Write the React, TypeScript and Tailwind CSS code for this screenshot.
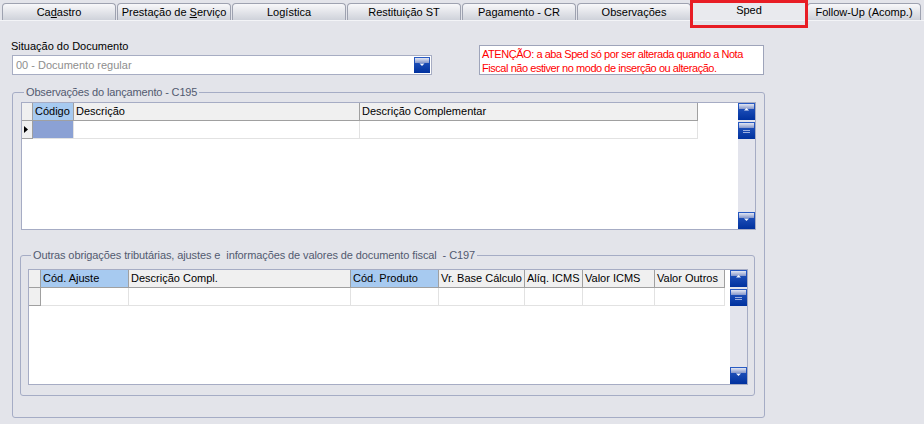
import type { ReactNode } from 'react'

type Col = { label: string; w: string; hl?: boolean }

const tabs: { key: string; label: ReactNode }[] = [
  { key: 'cad', label: <>Ca<u>d</u>astro</> },
  { key: 'pre', label: <>Prestação de <u>S</u>erviço</> },
  { key: 'log', label: 'Logística' },
  { key: 'res', label: 'Restituição ST' },
  { key: 'pag', label: 'Pagamento - CR' },
  { key: 'obs', label: 'Observações' },
  { key: 'sped', label: 'Sped' },
  { key: 'fol', label: 'Follow-Up (Acomp.)' },
]

const c195: Col[] = [
  { label: 'Código', w: 'w-[41px]', hl: true },
  { label: 'Descrição', w: 'w-[286px]' },
  { label: 'Descrição Complementar', w: 'w-[338px]' },
]

const c197: Col[] = [
  { label: 'Cód. Ajuste', w: 'w-[88px]', hl: true },
  { label: 'Descrição Compl.', w: 'w-[222px]' },
  { label: 'Cód. Produto', w: 'w-[88px]', hl: true },
  { label: 'Vr. Base Cálculo', w: 'w-[86px]' },
  { label: 'Alíq. ICMS', w: 'w-[58px]' },
  { label: 'Valor ICMS', w: 'w-[72px]' },
  { label: 'Valor Outros', w: 'w-[70px]' },
]

function BlueBtn({ kind, w = 17, h = 17 }: { kind: 'up' | 'down' | 'thumb'; w?: number; h?: number }) {
  const cx = w / 2
  return (
    <svg width={w} height={h} viewBox={`0 0 ${w} ${h}`} className="block shrink-0">
      <defs>
        <linearGradient id="bbDark" x1="0" y1="0" x2="0" y2="1">
          <stop offset="0" stopColor="#2a5cc4" />
          <stop offset="1" stopColor="#00319e" />
        </linearGradient>
        <linearGradient id="bbLight" x1="0" y1="0" x2="0" y2="1">
          <stop offset="0" stopColor="#e2e6f3" />
          <stop offset="1" stopColor="#8496ca" />
        </linearGradient>
      </defs>
      <rect width={w} height={h} fill="url(#bbDark)" />
      <rect x="1" y="1" width={w - 2} height="5" fill="url(#bbLight)" />
      {kind === 'up' && <path d={`M${cx - 2.5} 7.5 L${cx} 5 L${cx + 2.5} 7.5 Z`} fill="#f4f6fc" />}
      {kind === 'down' && <path d={`M${cx - 2.5} 6.5 L${cx + 2.5} 6.5 L${cx} 9 Z`} fill="#f4f6fc" />}
      {kind === 'thumb' && (
        <g stroke="#9cb0e2" strokeWidth="1">
          <line x1={cx - 3.5} y1="8.5" x2={cx + 3.5} y2="8.5" />
          <line x1={cx - 3.5} y1="10.5" x2={cx + 3.5} y2="10.5" />
        </g>
      )}
    </svg>
  )
}

function Grid({ cols, ind, outer, marker }: { cols: Col[]; ind: string; outer: string; marker?: boolean }) {
  return (
    <div className={`flex border border-[#a6acc4] bg-white ${outer}`}>
      <div className="flex-1">
        {/* header */}
        <div className="flex h-[18px]">
          <div className={`${ind} border-r border-b border-[#a0a0a0] bg-[#f0f0f0]`} />
          {cols.map((c) => (
            <div
              key={c.label}
              className={`${c.w} border-r border-b border-[#a0a0a0] pl-[2px] leading-[17px] whitespace-nowrap overflow-hidden ${
                c.hl ? 'bg-[#a7caf0]' : 'bg-[#f0f0f0]'
              }`}
            >
              {c.label}
            </div>
          ))}
        </div>
        {/* first row */}
        <div className="flex h-[18px]">
          <div className={`${ind} flex items-center pl-[2px] border-r border-b border-[#a0a0a0] bg-[#f0f0f0]`}>
            {marker && (
              <svg width="4" height="7" viewBox="0 0 4 7" className="block">
                <path d="M0 0 L4 3.5 L0 7 Z" fill="#000" />
              </svg>
            )}
          </div>
          {cols.map((c, i) => (
            <div
              key={c.label}
              className={`${c.w} border-r border-b border-[#e2e2e2] ${marker && i === 0 ? 'bg-[#8ba1d4]' : ''}`}
            />
          ))}
        </div>
      </div>
      {/* scrollbar */}
      <div className="flex w-[17px] flex-col bg-[#e3e4ec]">
        <BlueBtn kind="up" />
        <div className="mt-[2px]">
          <BlueBtn kind="thumb" />
        </div>
        <div className="flex-1" />
        <BlueBtn kind="down" />
      </div>
    </div>
  )
}

export default function App() {
  return (
    <div className="w-[924px] h-[424px] overflow-hidden bg-[#e3e4ea] font-['Liberation_Sans',Arial,sans-serif] text-[11px] text-black">
      {/* Tabs */}
      <div className="flex h-[21px] items-end gap-[1px] pl-[2px] border-b border-[#f3f4f7]">
        {tabs.map((t) =>
          t.key === 'sped' ? (
            <div key={t.key} className="relative h-[20px] w-[114px] rounded-t-[3px] bg-[#e9eaee] pt-[2px] text-center leading-[16px]">
              {t.label}
              {/* annotation box */}
              <div className="absolute left-[-2px] top-0 h-[28px] w-[118px] border-[3px] border-[#e81d25]" />
            </div>
          ) : (
            <div
              key={t.key}
              className="h-[17px] w-[114px] rounded-t-[4px] border border-b-0 border-[#9ea2b0] bg-gradient-to-b from-[#f8f8fa] to-[#cfd2da] pt-[1px] text-center leading-[15px] whitespace-nowrap"
            >
              {t.label}
            </div>
          )
        )}
      </div>

      {/* Situação + aviso */}
      <div className="mt-[19px] flex h-[37px]">
        <div className="flex flex-col pl-[11px]">
          <span className="leading-[13px]">Situação do Documento</span>
          <div className="ml-[1px] mt-[2px] flex h-[20px] w-[420px] items-center border border-[#a7adc3] bg-white">
            <span className="flex-1 pl-[3px] leading-[18px] text-[#8e8e8e]">00 - Documento regular</span>
            <div className="mr-[1px]">
              <BlueBtn kind="down" w={16} h={16} />
            </div>
          </div>
        </div>
        <div className="ml-[47px] mt-[5px] h-[30px] w-[285px] border border-[#9ea4ba] bg-white pl-[2px] pt-[1px] leading-[14px] tracking-[-0.45px] text-[#ff0000] whitespace-nowrap">
          ATENÇÃO: a aba Sped só por ser alterada quando a Nota
          <br />
          Fiscal não estiver no modo de inserção ou alteração.
        </div>
      </div>

      {/* C195 group */}
      <div className="relative ml-[12px] mt-[15px] h-[326px] w-[753px] rounded-[3px] border border-[#a5acc5] pl-[7px] pt-[9px]">
        <span className="absolute left-[11px] top-[-8px] bg-[#e3e4ea] px-[2px] leading-[14px] tracking-[-0.15px] text-[#525a70]">
          Observações do lançamento - C195
        </span>
        <Grid cols={c195} ind="w-[11px]" outer="ml-[1px] h-[128px] w-[735px]" marker />

        {/* C197 group */}
        <div className="relative mt-[25px] h-[141px] w-[735px] rounded-[3px] border border-[#a5acc5] pl-[7px] pt-[13px]">
          <span className="absolute left-[10px] top-[-8px] bg-[#e3e4ea] px-[2px] leading-[14px] tracking-[-0.1px] text-[#525a70] whitespace-pre">
            Outras obrigações tributárias, ajustes e  informações de valores de documento fiscal  - C197
          </span>
          <Grid cols={c197} ind="w-[12px]" outer="h-[116px] w-[720px]" />
        </div>
      </div>
    </div>
  )
}
